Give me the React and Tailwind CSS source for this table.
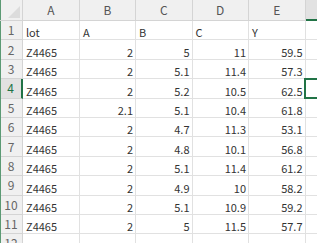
const cols = [
  { name: "A", w: "w-[57px]" },
  { name: "B", w: "w-[56px]" },
  { name: "C", w: "w-[56.5px]" },
  { name: "D", w: "w-[56.5px]" },
  { name: "E", w: "w-[56.5px]" },
  { name: "F", w: "w-[56px]" },
]

const rows = [
  ["lot", "A", "B", "C", "Y"],
  ["Z4465", 2, 5, 11, 59.5],
  ["Z4465", 2, 5.1, 11.4, 57.3],
  ["Z4465", 2, 5.2, 10.5, 62.5],
  ["Z4465", 2.1, 5.1, 10.4, 61.8],
  ["Z4465", 2, 4.7, 11.3, 53.1],
  ["Z4465", 2, 4.8, 10.1, 56.8],
  ["Z4465", 2, 5.1, 11.4, 61.2],
  ["Z4465", 2, 4.9, 10, 58.2],
  ["Z4465", 2, 5.1, 10.9, 59.2],
  ["Z4465", 2, 5, 11.5, 57.7],
  ["Z4465", 2, 5, 10.8, 57.4],
]

// selected cell is F4
const selRow = 3
const selCol = 5

function Cell({ value, w, selected }) {
  const num = typeof value === "number"
  return (
    <div className={`${w} shrink-0 relative h-full border-r border-b border-[#e1e1e1] flex items-end pb-[1px] ${num ? "justify-end pr-[2px]" : "justify-start pl-[3px]"}`}>
      {value !== undefined && <span>{value}</span>}
      {selected && <div className="absolute -left-[2px] -top-[1px] w-[60px] h-[21px] border-2 border-[#217346]" />}
    </div>
  )
}

export default function App() {
  return (
    <div className="w-[317px] h-[243px] overflow-hidden bg-white relative text-[11px] text-[#333]" style={{ fontFamily: '"Noto Sans CJK JP", "Noto Sans", sans-serif' }}>
      <div className="absolute left-0 top-0 w-[1px] h-full bg-[#5c9a74]" />
      {/* column headers */}
      <div className="flex h-[21px] bg-[#f0f0f0] text-[#555] text-[12px] leading-none">
        <div className="w-[23px] shrink-0 relative border-r border-b border-[#d4d4d4]">
          <svg className="absolute right-[2px] bottom-[2px]" width="12" height="12" viewBox="0 0 12 12">
            <polygon points="12,0 12,12 0,12" fill="#dcdcdc" />
          </svg>
        </div>
        {cols.map((c, i) => (
          <div key={c.name} className={`${c.w} shrink-0 flex items-center justify-center border-r border-[#d4d4d4] ${i === selCol ? "bg-[#e2e2e2] border-b-2 border-b-[#217346]" : "border-b"}`}>
            {c.name}
          </div>
        ))}
      </div>
      {rows.map((r, ri) => (
        <div key={ri} className="flex h-[19.4px] leading-none">
          <div className={`w-[23px] shrink-0 flex items-center justify-center text-[12px] border-b border-[#d4d4d4] ${ri === selRow ? "bg-[#e2e2e2] text-[#217346] border-r-2 border-r-[#217346]" : "bg-[#f0f0f0] text-[#666] border-r"}`}>
            {ri + 1}
          </div>
          {cols.map((c, ci) => (
            <Cell key={c.name} value={r[ci]} w={c.w} selected={ri === selRow && ci === selCol} />
          ))}
        </div>
      ))}
    </div>
  )
}
